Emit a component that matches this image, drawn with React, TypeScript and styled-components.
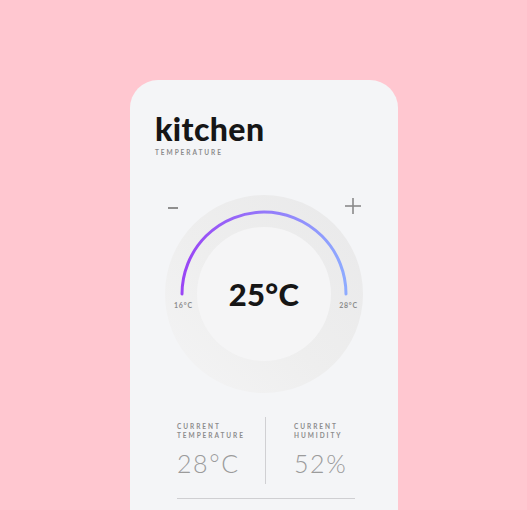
import * as React from 'react';
import styled, { createGlobalStyle } from 'styled-components';

const GlobalStyle = createGlobalStyle`
  html, body {
    margin: 0;
    padding: 0;
    background: #ffc7d0;
    font-family: 'Lato', 'Open Sans', sans-serif;
  }
`;

const Page = styled.div`
  width: 527px;
  height: 510px;
  overflow: hidden;
  display: flex;
  justify-content: center;
  padding-top: 80px;
  box-sizing: border-box;
`;

const Card = styled.div`
  width: 268px;
  height: 480px;
  margin-left: 1px;
  background: #f4f5f7;
  border-radius: 28px;
  padding: 31px 25px 0;
  box-sizing: border-box;
  display: flex;
  flex-direction: column;
`;

const Title = styled.h1`
  margin: 0;
  font-size: 32px;
  font-weight: 900;
  color: #161616;
  line-height: 36px;
  letter-spacing: 0.4px;
`;

const Label = styled.div`
  font-size: 6.5px;
  font-weight: 700;
  letter-spacing: 1.95px;
  color: #8c8c8c;
  text-transform: uppercase;
  line-height: 9px;
`;

const SubLabel = styled(Label)`
  margin-top: 1px;
`;

const DialArea = styled.div`
  position: relative;
  height: 200px;
  margin-top: 38px;
  display: flex;
  justify-content: center;
`;

const Outer = styled.div`
  width: 198px;
  height: 198px;
  border-radius: 50%;
  background: linear-gradient(45deg, #f4f4f5 0%, #eeeeee 45%, #e9e9ea 100%);
  display: flex;
  align-items: center;
  justify-content: center;
  position: relative;
`;

const Inner = styled.div`
  width: 134px;
  height: 134px;
  border-radius: 50%;
  background: #f5f5f6;
  display: flex;
  align-items: center;
  justify-content: center;
`;

const Reading = styled.div`
  font-size: 31px;
  font-weight: 900;
  color: #161616;
  margin-top: -1px;
  letter-spacing: 0.3px;
`;

const Arc = styled.svg`
  position: absolute;
  left: 0;
  top: 0;
`;

const Step = styled.svg<{ $side: 'left' | 'right' }>`
  position: absolute;
  top: 3px;
  ${p => (p.$side === 'left' ? 'left: 12px;' : 'right: 12px;')}
`;

const Limit = styled.span<{ $side: 'left' | 'right' }>`
  position: absolute;
  top: 106px;
  ${p => (p.$side === 'left' ? 'left: 19px;' : 'right: 15px;')}
  font-size: 7px;
  font-weight: 700;
  color: #8c8c8c;
  letter-spacing: 0.8px;
`;

const Stats = styled.div`
  display: grid;
  grid-template-columns: 1fr 1fr;
  margin: 22px 18px 0 22px;
  padding-bottom: 14px;
  border-bottom: 1px solid #cfcfd2;
`;

const Stat = styled.div<{ $first?: boolean }>`
  padding: 5px 0 6px ${p => (p.$first ? '0' : '28px')};
  border-right: ${p => (p.$first ? '1px solid #d0d0d3' : 'none')};
`;

const Value = styled.div`
  margin-top: 8px;
  font-size: 25px;
  font-weight: 300;
  color: #9b9b9b;
  letter-spacing: 1.6px;
`;

export default function App() {
  return (
    <Page>
      <GlobalStyle />
      <Card>
        <Title>kitchen</Title>
        <SubLabel>Temperature</SubLabel>
        <DialArea>
          <Step $side="left" width="16" height="16" viewBox="0 0 16 16">
            <line x1="1" y1="10" x2="11" y2="10" stroke="#8f8f8f" strokeWidth="2" />
          </Step>
          <Step $side="right" width="16" height="16" viewBox="0 0 16 16">
            <line x1="0" y1="8" x2="16" y2="8" stroke="#8a8a8a" strokeWidth="1.6" />
            <line x1="8" y1="0" x2="8" y2="16" stroke="#8a8a8a" strokeWidth="1.6" />
          </Step>
          <Outer>
            <Arc width="198" height="198" viewBox="0 0 198 198">
              <defs>
                <linearGradient id="arcGrad" x1="0" y1="0" x2="1" y2="0">
                  <stop offset="0%" stopColor="#9a45f5" />
                  <stop offset="100%" stopColor="#8eabff" />
                </linearGradient>
              </defs>
              <path
                d="M 17 99 A 82 82 0 0 1 181 99"
                fill="none"
                stroke="url(#arcGrad)"
                strokeWidth="3"
                strokeLinecap="round"
              />
            </Arc>
            <Inner>
              <Reading>25°C</Reading>
            </Inner>
          </Outer>
          <Limit $side="left">16°C</Limit>
          <Limit $side="right">28°C</Limit>
        </DialArea>
        <Stats>
          <Stat $first>
            <Label>Current<br />Temperature</Label>
            <Value>28°C</Value>
          </Stat>
          <Stat>
            <Label>Current<br />Humidity</Label>
            <Value>52%</Value>
          </Stat>
        </Stats>
      </Card>
    </Page>
  );
}
